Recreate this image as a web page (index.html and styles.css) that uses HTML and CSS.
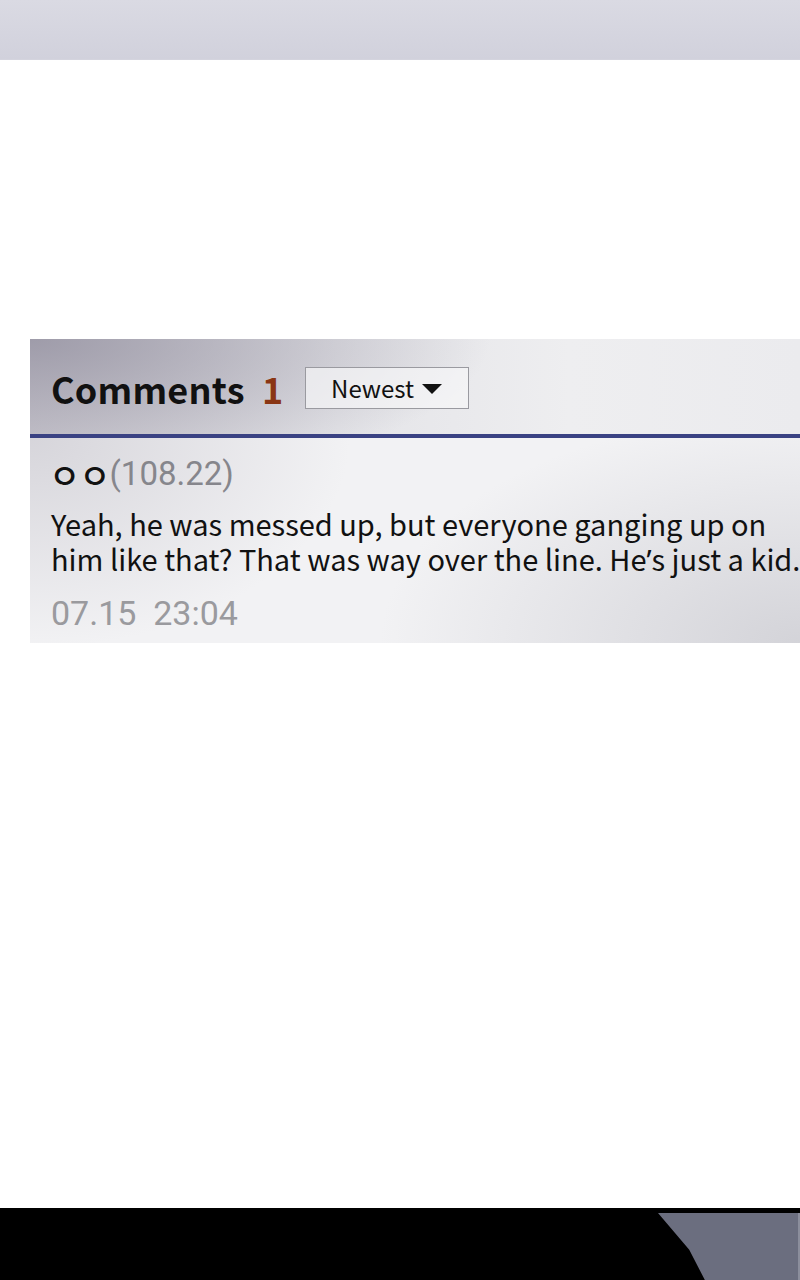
FILE: index.html
```html
<!DOCTYPE html>
<html lang="en">
<head>
    <meta charset="UTF-8">
    <meta name="viewport" content="width=device-width, initial-scale=1.0">
    <title>Comments</title>
    <link rel="stylesheet" href="styles.css">
</head>
<body>
    <div class="top-bar"></div>

    <div class="page">
        <div class="comments">
            <div class="comments-header">
                <h2>Comments <span class="count">1</span></h2>
                <div class="sort-btn">Newest <span class="caret"></span></div>
            </div>
            <div class="comment">
                <div class="comment-author"><span class="nick">ㅇㅇ</span><span class="ip">(108.22)</span></div>
                <p class="comment-text">Yeah, he was messed up, but everyone ganging up on<br>him like that? That was way over the line. He<span class="apos">’</span>s just a kid.</p>
                <div class="comment-date">07.15&nbsp;&nbsp;23:04</div>
            </div>
        </div>
    </div>

    <div class="bottom-bar">
        <div class="bottom-shape"></div>
    </div>
</body>
</html>
```

FILE: styles.css
```css
* {
    margin: 0;
    padding: 0;
    box-sizing: border-box;
}

html, body {
    height: 100%;
}

body {
    font-family: "Noto Sans CJK KR", "Noto Sans", sans-serif;
    background: #ffffff;
    display: flex;
    flex-direction: column;
    overflow: hidden;
}

.top-bar {
    height: 60px;
    background: linear-gradient(180deg, #dadae3 0%, #d1d1dc 100%);
    border-bottom: 1px solid #d4d4de;
}

.page {
    flex: 1;
    padding-top: 279px;
    padding-left: 30px;
}

.comments {
    width: 770px;
}

.comments-header {
    height: 99px;
    display: flex;
    align-items: center;
    padding-left: 21px;
    padding-top: 2px;
    background:
        radial-gradient(ellipse 460px 150px at 0% 0%, rgba(150, 147, 162, 0.85), rgba(150, 147, 162, 0) 100%),
        linear-gradient(90deg, #cfcdd4 0%, #e4e4e8 40%, #eeeef0 70%, #ebebee 100%);
    border-bottom: 4px solid #3a4283;
}

.comments-header h2 {
    font-size: 36px;
    font-weight: 700;
    color: #111111;
    letter-spacing: 0.2px;
}

.count {
    color: #8a3614;
    margin-left: 9px;
}

.sort-btn {
    margin-left: 21px;
    width: 164px;
    height: 42px;
    border: 1px solid #9a9aa0;
    background: rgba(246, 246, 248, 0.7);
    display: flex;
    align-items: center;
    justify-content: center;
    gap: 8px;
    font-size: 24px;
    color: #111111;
}

.caret {
    width: 0;
    height: 0;
    border-left: 10px solid transparent;
    border-right: 10px solid transparent;
    border-top: 10px solid #111111;
    margin-top: 2px;
}

.comment {
    height: 205px;
    padding: 14px 0 0 21px;
    background:
        radial-gradient(ellipse 320px 210px at 0% 0%, rgba(196, 194, 202, 0.6), rgba(196, 194, 202, 0) 100%),
        radial-gradient(ellipse 420px 230px at 100% 100%, rgba(186, 186, 194, 0.55), rgba(186, 186, 194, 0) 100%),
        #f2f2f4;
}

.comment-author {
    display: flex;
    align-items: center;
    height: 44px;
    font-family: Roboto, sans-serif;
    font-size: 33px;
    line-height: 44px;
    color: #86868c;
}

.nick {
    color: #111111;
    font-family: "Noto Sans CJK KR", sans-serif;
    font-size: 34px;
    line-height: 1;
    font-weight: 500;
    letter-spacing: -1px;
    margin-left: -2px;
    margin-right: 0;
    margin-top: 2px;
}

.comment-text {
    margin-top: 10px;
    font-size: 29px;
    line-height: 35px;
    color: #111111;
    white-space: nowrap;
}

.apos {
    font-family: "Noto Sans", sans-serif;
}

.comment-date {
    margin-top: 14px;
    font-family: Roboto, sans-serif;
    font-size: 34px;
    line-height: 44px;
    color: #9a9a9e;
}

.bottom-bar {
    height: 72px;
    background: #000000;
    position: relative;
    overflow: hidden;
}

.bottom-shape {
    position: absolute;
    top: 5px;
    right: 0;
    width: 142px;
    height: 67px;
    background: #6b6e7f;
    clip-path: polygon(0 0, 100% 0, 100% 100%, 33% 100%, 22% 55%);
    border-right: 2px solid #8b8e9c;
}
```
